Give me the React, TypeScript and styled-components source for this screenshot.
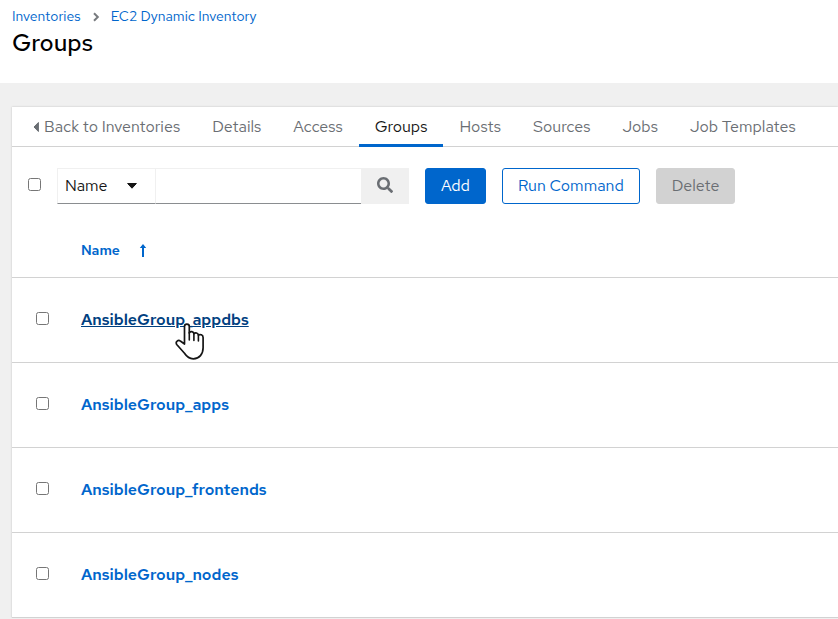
import React from "react";
import styled, { createGlobalStyle } from "styled-components";

const GlobalStyle = createGlobalStyle`
  *, *::before, *::after { box-sizing: border-box; }
  body {
    margin: 0;
    background: #f0f0f0;
    color: #151515;
    font-family: "Red Hat Text", Inter, "Liberation Sans", sans-serif;
    font-size: 16px;
    line-height: 24px;
  }
  button, input, select { font: inherit; color: inherit; margin: 0; }
`;

const PageHeader = styled.header`
  background: #fff;
  padding: 6px 12px 24px;
`;

const Breadcrumb = styled.nav`
  display: flex;
  align-items: center;
  gap: 11px;
  font-size: 14px;
  line-height: 21px;
`;

const Link = styled.a`
  color: #0066cc;
  text-decoration: none;
`;

const Title = styled.h1`
  margin: 0;
  font-size: 24px;
  font-weight: 500;
  line-height: 32px;
  color: #000;
`;

const Main = styled.main`
  padding: 24px 0 0 12px;
`;

const Card = styled.section`
  background: #fff;
  box-shadow: 0 0 2px rgba(3, 3, 3, 0.2);
`;

const Tabs = styled.nav`
  display: flex;
  height: 40px;
  padding-left: 5px;
  border-bottom: 1px solid #d2d2d2;
`;

const Tab = styled.a<{ $active?: boolean }>`
  display: flex;
  align-items: center;
  gap: 5px;
  height: 40px;
  padding: 0 16px;
  white-space: nowrap;
  text-decoration: none;
  color: ${(p) => (p.$active ? "#151515" : "#6a6e73")};
  box-shadow: ${(p) => (p.$active ? "inset 0 -3px #0066cc" : "none")};
`;

const Toolbar = styled.div`
  display: flex;
  align-items: center;
  gap: 16px;
  padding: 21px 16px 20px;
`;

const Check = styled.input.attrs({ type: "checkbox" })`
  display: block;
  width: 13px;
  height: 13px;
`;

const SelectAll = styled.label`
  padding-bottom: 3px;
`;

const SearchGroup = styled.form`
  display: flex;
  height: 36px;
`;

const SelectWrap = styled.label`
  display: flex;
  align-items: center;
  width: 98px;
  padding-right: 18px;
  border: solid #f0f0f0;
  border-width: 1px 0 0 1px;
  border-bottom: 1px solid #8a8d90;
`;

const FilterSelect = styled.select`
  appearance: none;
  flex: 1;
  min-width: 0;
  height: 34px;
  padding: 0 7px;
  border: 0;
  background: transparent;
`;

const SearchInput = styled.input`
  width: 206px;
  padding: 0 8px;
  border: 1px solid #f0f0f0;
  border-right: 0;
  border-bottom-color: #8a8d90;
  border-radius: 0;
  background: #fff;
`;

const SearchButton = styled.button`
  display: grid;
  place-items: center;
  width: 48px;
  padding: 0 0 2px;
  border: 0;
  background: #f0f0f0;
  color: #6a6e73;
`;

const Button = styled.button<{ $kind: "primary" | "secondary" | "disabled" }>`
  height: 36px;
  padding: 0 15px;
  border: 1px solid ${(p) => (p.$kind === "disabled" ? "#d2d2d2" : "#0066cc")};
  border-radius: 3px;
  white-space: nowrap;
  background: ${(p) =>
    ({ primary: "#0066cc", secondary: "#fff", disabled: "#d2d2d2" })[p.$kind]};
  color: ${(p) =>
    ({ primary: "#fff", secondary: "#0066cc", disabled: "#6a6e73" })[p.$kind]};
`;

const Table = styled.table`
  width: 100%;
  border-collapse: collapse;
  table-layout: fixed;
`;

const HeadCell = styled.th`
  height: 53px;
  padding: 0;
  border-bottom: 1px solid #d2d2d2;
  text-align: left;
`;

const CheckHead = styled(HeadCell)`
  width: 69px;
`;

const SortButton = styled.button`
  display: flex;
  align-items: center;
  gap: 19px;
  padding: 0;
  border: 0;
  background: none;
  color: #0066cc;
  font-size: 14px;
  font-weight: 600;
`;

const Cell = styled.td`
  height: 85px;
  padding: 0;
  border-bottom: 1px solid #d2d2d2;
`;

const CheckCell = styled(Cell)`
  padding: 0 0 3px 24px;
`;

const GroupLink = styled.a<{ $hovered: boolean }>`
  position: relative;
  font-weight: 600;
  color: ${(p) => (p.$hovered ? "#004080" : "#0066cc")};
  text-decoration: ${(p) => (p.$hovered ? "underline" : "none")};
`;

const Pointer = styled.svg`
  position: absolute;
  left: 94px;
  top: 14px;
  pointer-events: none;
`;

const tabs = ["Details", "Access", "Groups", "Hosts", "Sources", "Jobs", "Job Templates"];
const groups = [
  "AnsibleGroup_appdbs",
  "AnsibleGroup_apps",
  "AnsibleGroup_frontends",
  "AnsibleGroup_nodes",
];

const HandPointer = () => (
  <Pointer width="30" height="37" viewBox="0 0 30 37" aria-hidden="true">
    <path
      d="M9.5 21V3.5C9.5.2 14.3.2 14.3 3.5V10c1-2.2 4.4-1.7 4.6.8 1.3-1.6 4.2-.9 4.5 1.4 1.6-1.3 4.7-.5 4.7 2.3v10.2c0 6.4-3.7 11.1-9.8 11.1-4.4 0-6.5-2-8.8-5.5L1.7 21.5c-1.6-2.8 1.5-5.2 4-3.2Z"
      fill="#fff" stroke="#151515" strokeWidth="1.7" strokeLinejoin="round"
    />
    <path d="M14.3 9.5V17M18.9 10.8V17.5M23.4 12.2V18" fill="none" stroke="#151515" strokeWidth="1.6" strokeLinecap="round" />
  </Pointer>
);

export default function App() {
  return (
    <>
      <GlobalStyle />
      <PageHeader>
        <Breadcrumb aria-label="Breadcrumb">
          <Link href="#inventories">Inventories</Link>
          <svg width="8" height="10" viewBox="0 0 8 10" aria-hidden="true">
            <path d="m2 1.3 3.8 3.7L2 8.7" fill="none" stroke="#777a7e" strokeWidth="2" />
          </svg>
          <Link href="#ec2">EC2 Dynamic Inventory</Link>
        </Breadcrumb>
        <Title>Groups</Title>
      </PageHeader>
      <Main>
        <Card>
          <Tabs aria-label="Inventory sections">
            <Tab href="#back">
              <svg width="6" height="10" viewBox="0 0 6 10" aria-hidden="true">
                <path d="M5.4.5v9L1 5Z" fill="#6a6e73" stroke="#6a6e73" strokeLinejoin="round" />
              </svg>
              Back to Inventories
            </Tab>
            {tabs.map((name) => (
              <Tab key={name} href={`#${name}`} $active={name === "Groups"} aria-current={name === "Groups" ? "page" : undefined}>
                {name}
              </Tab>
            ))}
          </Tabs>
          <Toolbar>
            <SelectAll><Check aria-label="Select all" /></SelectAll>
            <SearchGroup onSubmit={(e) => e.preventDefault()}>
              <SelectWrap>
                <FilterSelect aria-label="Filter by">
                  <option>Name</option>
                </FilterSelect>
                <svg width="10" height="6" viewBox="0 0 10 6" aria-hidden="true">
                  <path d="M.6.5h8.8L5 5.2Z" fill="#151515" stroke="#151515" strokeLinejoin="round" />
                </svg>
              </SelectWrap>
              <SearchInput type="text" aria-label="Search text" />
              <SearchButton type="submit" aria-label="Search">
                <svg width="16" height="16" viewBox="0 0 512 512" aria-hidden="true">
                  <path
                    fill="currentColor"
                    d="M505 442.7 405.3 343c-4.5-4.5-10.6-7-17-7H372c27.6-35.3 44-79.7 44-128C416 93.1 322.9 0 208 0S0 93.1 0 208s93.1 208 208 208c48.3 0 92.7-16.4 128-44v16.3c0 6.4 2.5 12.5 7 17l99.7 99.7c9.4 9.4 24.6 9.4 33.9 0l28.3-28.3c9.4-9.4 9.4-24.6.1-34zM208 336c-70.7 0-128-57.2-128-128 0-70.7 57.2-128 128-128 70.7 0 128 57.2 128 128 0 70.7-57.2 128-128 128z"
                  />
                </svg>
              </SearchButton>
            </SearchGroup>
            <Button $kind="primary">Add</Button>
            <Button $kind="secondary">Run Command</Button>
            <Button $kind="disabled" disabled>Delete</Button>
          </Toolbar>
          <Table>
            <thead>
              <tr>
                <CheckHead aria-label="Selection" />
                <HeadCell aria-sort="ascending">
                  <SortButton>
                    Name
                    <svg width="8" height="13" viewBox="0 0 8 13" aria-hidden="true">
                      <path d="M4 0 .8 3.9H3V13h2V3.9h2.2Z" fill="currentColor" />
                    </svg>
                  </SortButton>
                </HeadCell>
              </tr>
            </thead>
            <tbody>
              {groups.map((name, i) => (
                <tr key={name}>
                  <CheckCell><Check aria-label={`Select ${name}`} /></CheckCell>
                  <Cell>
                    <GroupLink href={`#${name}`} $hovered={i === 0}>
                      {name}
                      {i === 0 && <HandPointer />}
                    </GroupLink>
                  </Cell>
                </tr>
              ))}
            </tbody>
          </Table>
        </Card>
      </Main>
    </>
  );
}
